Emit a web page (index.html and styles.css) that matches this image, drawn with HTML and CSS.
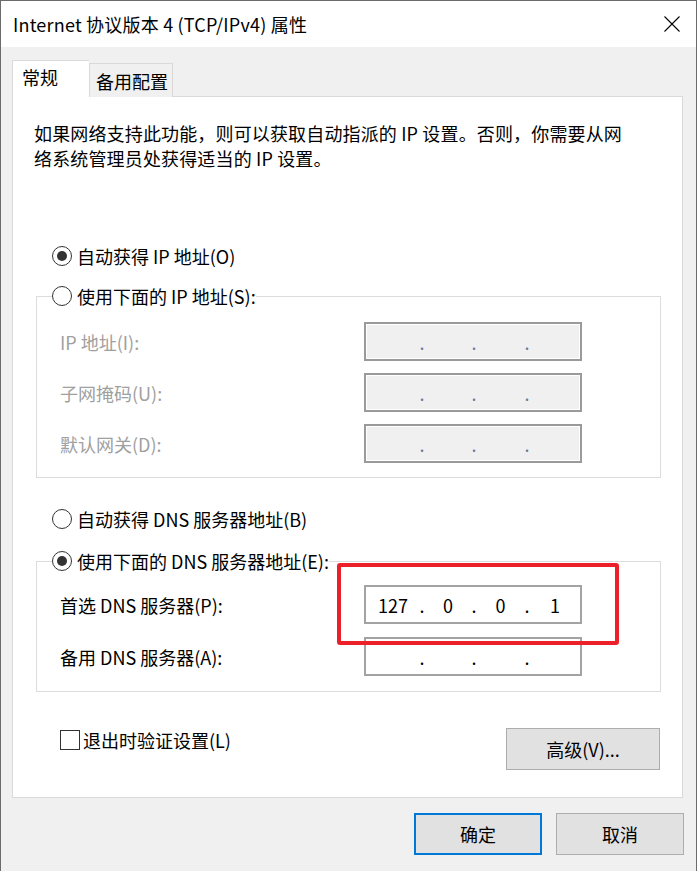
FILE: index.html
```html
<!DOCTYPE html>
<html lang="zh-CN">
<head>
<meta charset="utf-8">
<title>Internet 协议版本 4 (TCP/IPv4) 属性</title>
<link rel="stylesheet" href="styles.css">
</head>
<body>
<div class="window">
  <div class="titlebar">
    <span class="title">Internet 协议版本 4 (TCP/IPv4) 属性</span>
    <svg class="close" width="16" height="16" viewBox="0 0 16 16"><path d="M0.5 0.5 L15.5 15.5 M15.5 0.5 L0.5 15.5" stroke="#000" stroke-width="1.1" fill="none"/></svg>
  </div>
  <div class="body">
    <div class="tabs">
      <div class="tab active">常规</div>
      <div class="tab">备用配置</div>
    </div>
    <div class="panel">
      <p class="desc">如果网络支持此功能，则可以获取自动指派的 IP 设置。否则，你需要从网<br>络系统管理员处获得适当的 IP 设置。</p>

      <div class="radio-row first">
        <span class="radio checked"></span><span>自动获得 IP 地址(O)</span>
      </div>

      <fieldset class="group group-ip">
        <legend class="radio-row"><span class="radio"></span><span>使用下面的 IP 地址(S):</span></legend>
        <div class="field-row">
          <span class="label disabled">IP 地址(I):</span>
          <div class="ipbox disabled-box"><span class="s1"></span><span class="dot">.</span><span class="s2"></span><span class="dot">.</span><span class="s3"></span><span class="dot">.</span><span class="s4"></span></div>
        </div>
        <div class="field-row">
          <span class="label disabled">子网掩码(U):</span>
          <div class="ipbox disabled-box"><span class="s1"></span><span class="dot">.</span><span class="s2"></span><span class="dot">.</span><span class="s3"></span><span class="dot">.</span><span class="s4"></span></div>
        </div>
        <div class="field-row">
          <span class="label disabled">默认网关(D):</span>
          <div class="ipbox disabled-box"><span class="s1"></span><span class="dot">.</span><span class="s2"></span><span class="dot">.</span><span class="s3"></span><span class="dot">.</span><span class="s4"></span></div>
        </div>
      </fieldset>

      <div class="radio-row dns-auto">
        <span class="radio"></span><span>自动获得 DNS 服务器地址(B)</span>
      </div>

      <fieldset class="group group-dns">
        <legend class="radio-row"><span class="radio checked"></span><span>使用下面的 DNS 服务器地址(E):</span></legend>
        <div class="field-row">
          <span class="label">首选 DNS 服务器(P):</span>
          <div class="ipbox"><span class="s1">127</span><span class="dot">.</span><span class="s2">0</span><span class="dot">.</span><span class="s3">0</span><span class="dot">.</span><span class="s4">1</span></div>
        </div>
        <div class="field-row">
          <span class="label">备用 DNS 服务器(A):</span>
          <div class="ipbox"><span class="s1"></span><span class="dot">.</span><span class="s2"></span><span class="dot">.</span><span class="s3"></span><span class="dot">.</span><span class="s4"></span></div>
        </div>
      </fieldset>

      <div class="bottom-row">
        <label class="check-row"><span class="checkbox"></span><span>退出时验证设置(L)</span></label>
        <button class="btn advanced">高级(V)...</button>
      </div>
    </div>
    <div class="actions">
      <button class="btn ok">确定</button>
      <button class="btn cancel">取消</button>
    </div>
  </div>
  <div class="highlight"></div>
</div>
</body>
</html>
```
FILE: styles.css
```css
* { box-sizing: border-box; }

html, body {
  margin: 0;
  padding: 0;
  background: #f0f0f0;
}

body {
  font-family: "Microsoft YaHei UI", "Noto Sans CJK SC", sans-serif;
  font-size: 18px;
  color: #000;
}

.window {
  position: relative;
  width: 697px;
  height: 871px;
  border: 1px solid #6b6b6b;
  border-bottom: none;
  background: #f0f0f0;
  overflow: hidden;
}

.titlebar {
  height: 46px;
  background: #fff;
  display: flex;
  align-items: center;
  justify-content: space-between;
  padding: 0 16px 0 12px;
}

.title {
  font-size: 18px;
  line-height: 24px;
  letter-spacing: 0.2px;
}

.close {
  display: block;
}

.body {
  padding: 14px 0 0 11px;
}

.tabs {
  display: flex;
  align-items: flex-end;
  height: 36px;
  position: relative;
  z-index: 1;
  margin-bottom: -1px;
}

.tab {
  height: 34px;
  border: 1px solid #d9d9d9;
  border-bottom: none;
  background: #f0f0f0;
  font-size: 18px;
}

.tab.active {
  height: 37px;
  width: 77px;
  padding-left: 9px;
  background: #fff;
  border-right: none;
  line-height: 32px;
}

.tab:not(.active) {
  width: 84px;
  padding-left: 6px;
  line-height: 34px;
}

.panel {
  width: 671px;
  height: 702px;
  background: #fff;
  border: 1px solid #d9d9d9;
  padding: 0;
}

.desc {
  margin: 24px 0 0 21px;
  line-height: 25px;
  font-size: 18px;
  letter-spacing: 0.15px;
}

.radio-row {
  display: flex;
  align-items: center;
  height: 30px;
  gap: 5px;
  line-height: 30px;
  white-space: nowrap;
}

.radio-row.first {
  margin: 70px 0 0 39px;
}

.radio {
  width: 20px;
  height: 20px;
  border: 1.4px solid #333;
  border-radius: 50%;
  background: #fff;
  display: inline-flex;
  align-items: center;
  justify-content: center;
  flex: none;
}

.radio.checked::after {
  content: "";
  width: 10px;
  height: 10px;
  border-radius: 50%;
  background: #333;
}

.group {
  margin: 0 0 0 23px;
  width: 625px;
  border: 1px solid #dcdcdc;
  padding: 0 0 14px 0;
  min-width: 0;
}

.group legend {
  padding: 0;
  margin-left: 15px;
  background: #fff;
}

.group-ip {
  margin-top: 10px;
}

.group-ip .field-row:first-of-type {
  margin-top: 11px;
}

.group-dns {
  margin-top: 12px;
  padding-bottom: 15px;
}

.group-dns .field-row:first-of-type {
  margin-top: 9px;
}

.group-dns .field-row + .field-row {
  margin-top: 13px;
}

.field-row {
  display: flex;
  align-items: center;
  height: 39px;
  padding-left: 23px;
}

.field-row + .field-row {
  margin-top: 12px;
}

.label {
  width: 304px;
  flex: none;
  line-height: 24px;
}

.label.disabled {
  color: #a0a0a0;
}

.ipbox {
  width: 218px;
  height: 39px;
  border: 2px solid #a3a3a3;
  background: #fff;
  display: flex;
  align-items: center;
  line-height: 24px;
  font-size: 18px;
}

.ipbox.disabled-box {
  background: #f0f0f0;
  border-color: #9a9a9a;
  box-shadow: inset 0 0 0 1px #fff;
}

.ipbox.disabled-box .dot {
  color: #6c7a99;
}

.ipbox span {
  text-align: center;
  flex: none;
}

.ipbox .s1 { width: 53px; padding-left: 1px; }
.ipbox .s2 { width: 46px; }
.ipbox .s3 { width: 47px; }
.ipbox .s4 { width: 50px; }
.ipbox .dot { width: 6px; }

.dns-auto {
  margin: 26px 0 0 39px;
}

.bottom-row {
  display: flex;
  justify-content: space-between;
  align-items: flex-start;
  margin: 36px 22px 0 47px;
}

.check-row {
  display: flex;
  align-items: center;
  gap: 3px;
  margin-top: 2px;
  height: 20px;
  line-height: 24px;
}

.checkbox {
  width: 20px;
  height: 20px;
  border: 1.4px solid #333;
  background: #fff;
  flex: none;
}

.btn {
  font-family: inherit;
  font-size: 18px;
  color: #000;
  background: #e1e1e1;
  border: 1px solid #adadad;
  height: 42px;
  padding: 0;
  margin: 0;
  line-height: 24px;
}

.advanced {
  width: 154px;
}

.actions {
  display: flex;
  justify-content: flex-end;
  gap: 14px;
  margin: 15px 12px 0 0;
}

.ok, .cancel {
  width: 128px;
}

.ok {
  border: 2px solid #0078d7;
}

.highlight {
  position: absolute;
  left: 336px;
  top: 562px;
  width: 282px;
  height: 82px;
  border: 4px solid #ec2029;
  border-radius: 3px;
  pointer-events: none;
}
```
